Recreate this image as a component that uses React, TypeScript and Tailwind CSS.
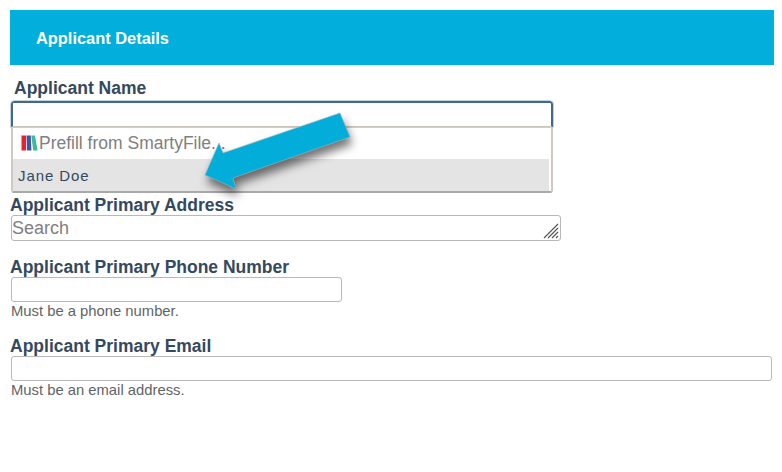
import React from 'react';

const Label: React.FC<{ children: React.ReactNode; className?: string }> = ({ children, className }) => (
  <div className={`text-[17.5px] leading-[18px] font-bold text-[#34495e] ${className ?? ''}`}>{children}</div>
);

const Hint: React.FC<{ children: React.ReactNode }> = ({ children }) => (
  <div className="mt-[1px] ml-[1px] text-[14.8px] leading-[16px] text-[#5f6368]">{children}</div>
);

const Logo = () => (
  <svg width="17" height="16" viewBox="0 0 17 16" className="shrink-0">
    <path d="M0.5 0.5h4.5v15H0.5z" fill="#e8202f" />
    <path d="M5.5 0.5h4.3l0.6 15H5.9z" fill="#3f55a5" />
    <path d="M10.3 0.5h3.7l2.6 15h-4.4z" fill="#3dbb98" />
  </svg>
);

const Arrow = () => (
  <svg
    width="190"
    height="105"
    viewBox="0 0 190 105"
    className="absolute left-[190px] top-[100px] overflow-visible drop-shadow-[2px_7px_5px_rgba(0,0,0,0.55)]"
  >
    <path d="M150 13L160 37L43 78L46 89L15 75L29 43L33 53Z" fill="#02aed9" stroke="#9fb4bb" strokeWidth="0.6" />
  </svg>
);

export default function App() {
  return (
    <div className="relative w-[782px] h-[472px] bg-white font-['Liberation_Sans',Arial,sans-serif] overflow-hidden pt-[10px] pl-[10px]">
      <div className="w-[764px] h-[55px] bg-[#02aedb] flex items-center pl-[26px] pt-[2px] text-white text-[16.4px] font-bold">
        Applicant Details
      </div>

      <Label className="mt-[14px] ml-[4px]">Applicant Name</Label>
      <div className="mt-[4px] ml-[1px] w-[542px] h-[26px] rounded-t-[3px] border-x-2 border-t-2 border-[#44688a] outline outline-[1px] outline-[#c3d3e0] bg-white border-b border-b-[#c9c3b8]" />

      <div className="ml-[1px] w-[542px] h-[66px] rounded-b-[3px] border-x-2 border-[#cfc9c0] border-b-2 border-b-[#a9a9a9] bg-white flex flex-col">
        <div className="h-[32px] flex items-center gap-[1px] pl-[8px] text-[17.5px] text-[#808080]">
          <Logo />
          <span>Prefill from SmartyFile...</span>
        </div>
        <div className="h-[32px] w-[536px] flex items-center pl-[5px] pt-[2px] bg-[#e4e4e4] text-[15px] tracking-[0.9px] text-[#34495e]">
          Jane Doe
        </div>
      </div>

      <Label className="mt-[3px]">Applicant Primary Address</Label>
      <div className="relative mt-[1px] ml-[1px] w-[550px] h-[26px] rounded-[3px] border border-[#b8b8b8] bg-white flex items-center text-[18px] text-[#808080]">
        Search
        <svg width="16" height="16" viewBox="0 0 16 16" className="absolute right-[1px] bottom-[1px]">
          <path d="M15 1L1 15M15 5L5 15M15 9L9 15M15 13L13 15" stroke="#555" strokeWidth="1.1" />
        </svg>
      </div>

      <Label className="mt-[17px]">Applicant Primary Phone Number</Label>
      <div className="mt-[1px] ml-[1px] w-[331px] h-[25px] rounded-[3px] border border-[#b8b8b8] bg-white" />
      <Hint>Must be a phone number.</Hint>

      <Label className="mt-[18px]">Applicant Primary Email</Label>
      <div className="mt-[1px] ml-[1px] w-[761px] h-[25px] rounded-[3px] border border-[#b8b8b8] bg-white" />
      <Hint>Must be an email address.</Hint>

      <Arrow />
    </div>
  );
}
